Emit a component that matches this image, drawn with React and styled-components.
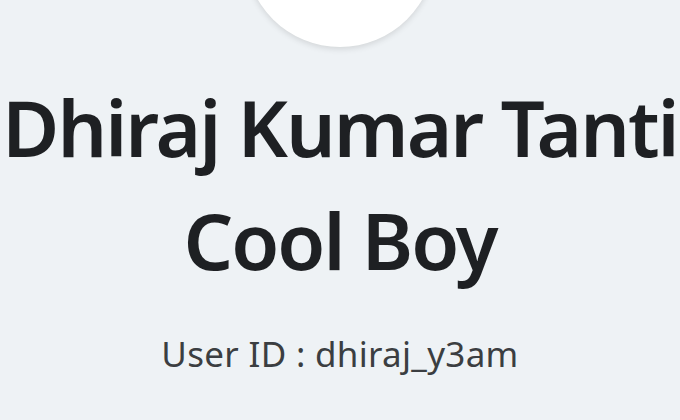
import React from "react";
import styled, { createGlobalStyle } from "styled-components";

const GlobalStyle = createGlobalStyle`
  html, body {
    margin: 0;
    padding: 0;
    background-color: #eef2f5;
    font-family: "Noto Sans", "Open Sans", sans-serif;
    overflow: hidden;
  }
`;

const ProfileContainer = styled.div`
  width: 680px;
  height: 420px;
  display: flex;
  flex-direction: column;
  align-items: center;
  background-color: #eef2f5;
`;

const Avatar = styled.div`
  width: 190px;
  height: 190px;
  margin-top: -143px;
  border-radius: 50%;
  background-color: #ffffff;
  box-shadow: 0 2px 6px rgba(0, 0, 0, 0.12);
  flex-shrink: 0;
`;

const Name = styled.h1`
  margin: 24px 0 0 0;
  font-size: 78px;
  font-weight: 600;
  line-height: 113px;
  letter-spacing: -2px;
  color: #1e2023;
  text-align: center;
  white-space: nowrap;
`;

const UserId = styled.p`
  margin: 33px 0 0 0;
  font-size: 35px;
  font-weight: 400;
  letter-spacing: 0.3px;
  color: #3b3e41;
  text-align: center;
`;

export default function App() {
  return (
    <ProfileContainer>
      <GlobalStyle />
      <Avatar />
      <Name>
        Dhiraj Kumar Tanti
        <br />
        Cool Boy
      </Name>
      <UserId>User ID : dhiraj_y3am</UserId>
    </ProfileContainer>
  );
}
